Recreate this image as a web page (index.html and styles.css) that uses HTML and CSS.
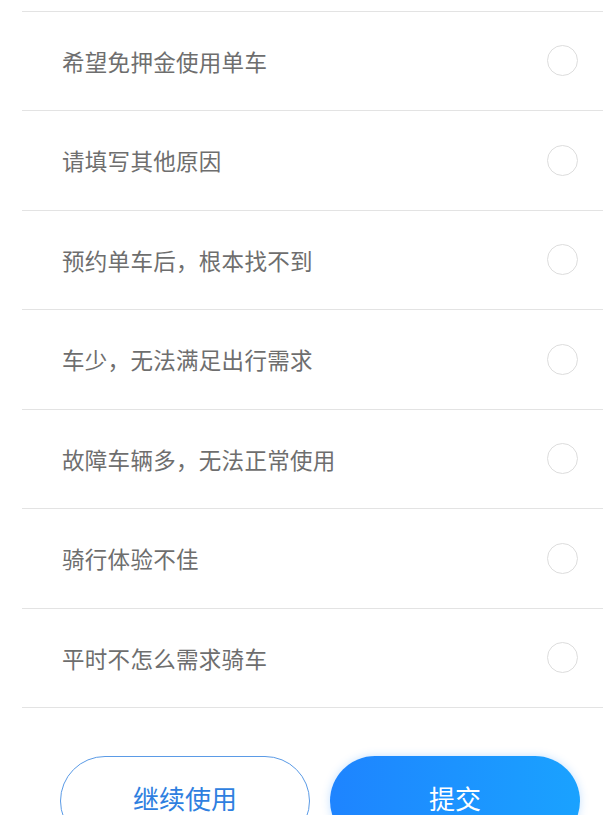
FILE: index.html
```html
<!DOCTYPE html>
<html lang="zh-CN">
<head>
<meta charset="utf-8">
<link rel="stylesheet" href="styles.css">
</head>
<body>
<div class="page">
  <div class="list">
    <div class="spacer"></div>
    <div class="row"><span class="label">希望免押金使用单车</span><span class="radio"></span></div>
    <div class="row"><span class="label">请填写其他原因</span><span class="radio"></span></div>
    <div class="row"><span class="label">预约单车后，根本找不到</span><span class="radio"></span></div>
    <div class="row"><span class="label">车少，无法满足出行需求</span><span class="radio"></span></div>
    <div class="row"><span class="label">故障车辆多，无法正常使用</span><span class="radio"></span></div>
    <div class="row"><span class="label">骑行体验不佳</span><span class="radio"></span></div>
    <div class="row"><span class="label">平时不怎么需求骑车</span><span class="radio"></span></div>
  </div>
  <div class="actions">
    <button class="btn btn-outline">继续使用</button>
    <button class="btn btn-primary">提交</button>
  </div>
</div>
</body>
</html>
```
FILE: styles.css
```css
html, body {
  margin: 0;
  padding: 0;
  background: #ffffff;
}
body {
  font-family: "Noto Sans CJK SC", "Noto Sans", sans-serif;
  overflow: hidden;
}
.page {
  width: 603px;
  height: 815px;
  overflow: hidden;
}
.list {
  margin-left: 22px;
}
.spacer {
  height: 11.5px;
  box-sizing: border-box;
  border-bottom: 1px solid #e3e3e3;
}
.row {
  height: 99.5px;
  box-sizing: border-box;
  border-bottom: 1px solid #e3e3e3;
  display: flex;
  align-items: center;
  justify-content: space-between;
  padding-left: 40px;
  padding-right: 25px;
}
.label {
  font-size: 22.5px;
  color: #6e6e6e;
  letter-spacing: 0.3px;
}
.radio {
  width: 31px;
  height: 31px;
  box-sizing: border-box;
  border: 1.5px solid #dddddd;
  border-radius: 50%;
}
.actions {
  display: flex;
  gap: 20px;
  padding-left: 60px;
  margin-top: 47.5px;
}
.btn {
  width: 250px;
  height: 90px;
  border-radius: 45px;
  font-family: "Noto Sans CJK SC", "Noto Sans", sans-serif;
  font-size: 26px;
  padding: 0;
  padding-bottom: 6px;
  box-sizing: border-box;
}
.btn-outline {
  background: #ffffff;
  border: 1px solid #5b9be6;
  color: #2f7fe0;
}
.btn-primary {
  border: none;
  color: #ffffff;
  background: linear-gradient(to right, #1e84ff, #1aa2ff);
  box-shadow: 0 0 8px rgba(30, 140, 255, 0.25);
}
```
